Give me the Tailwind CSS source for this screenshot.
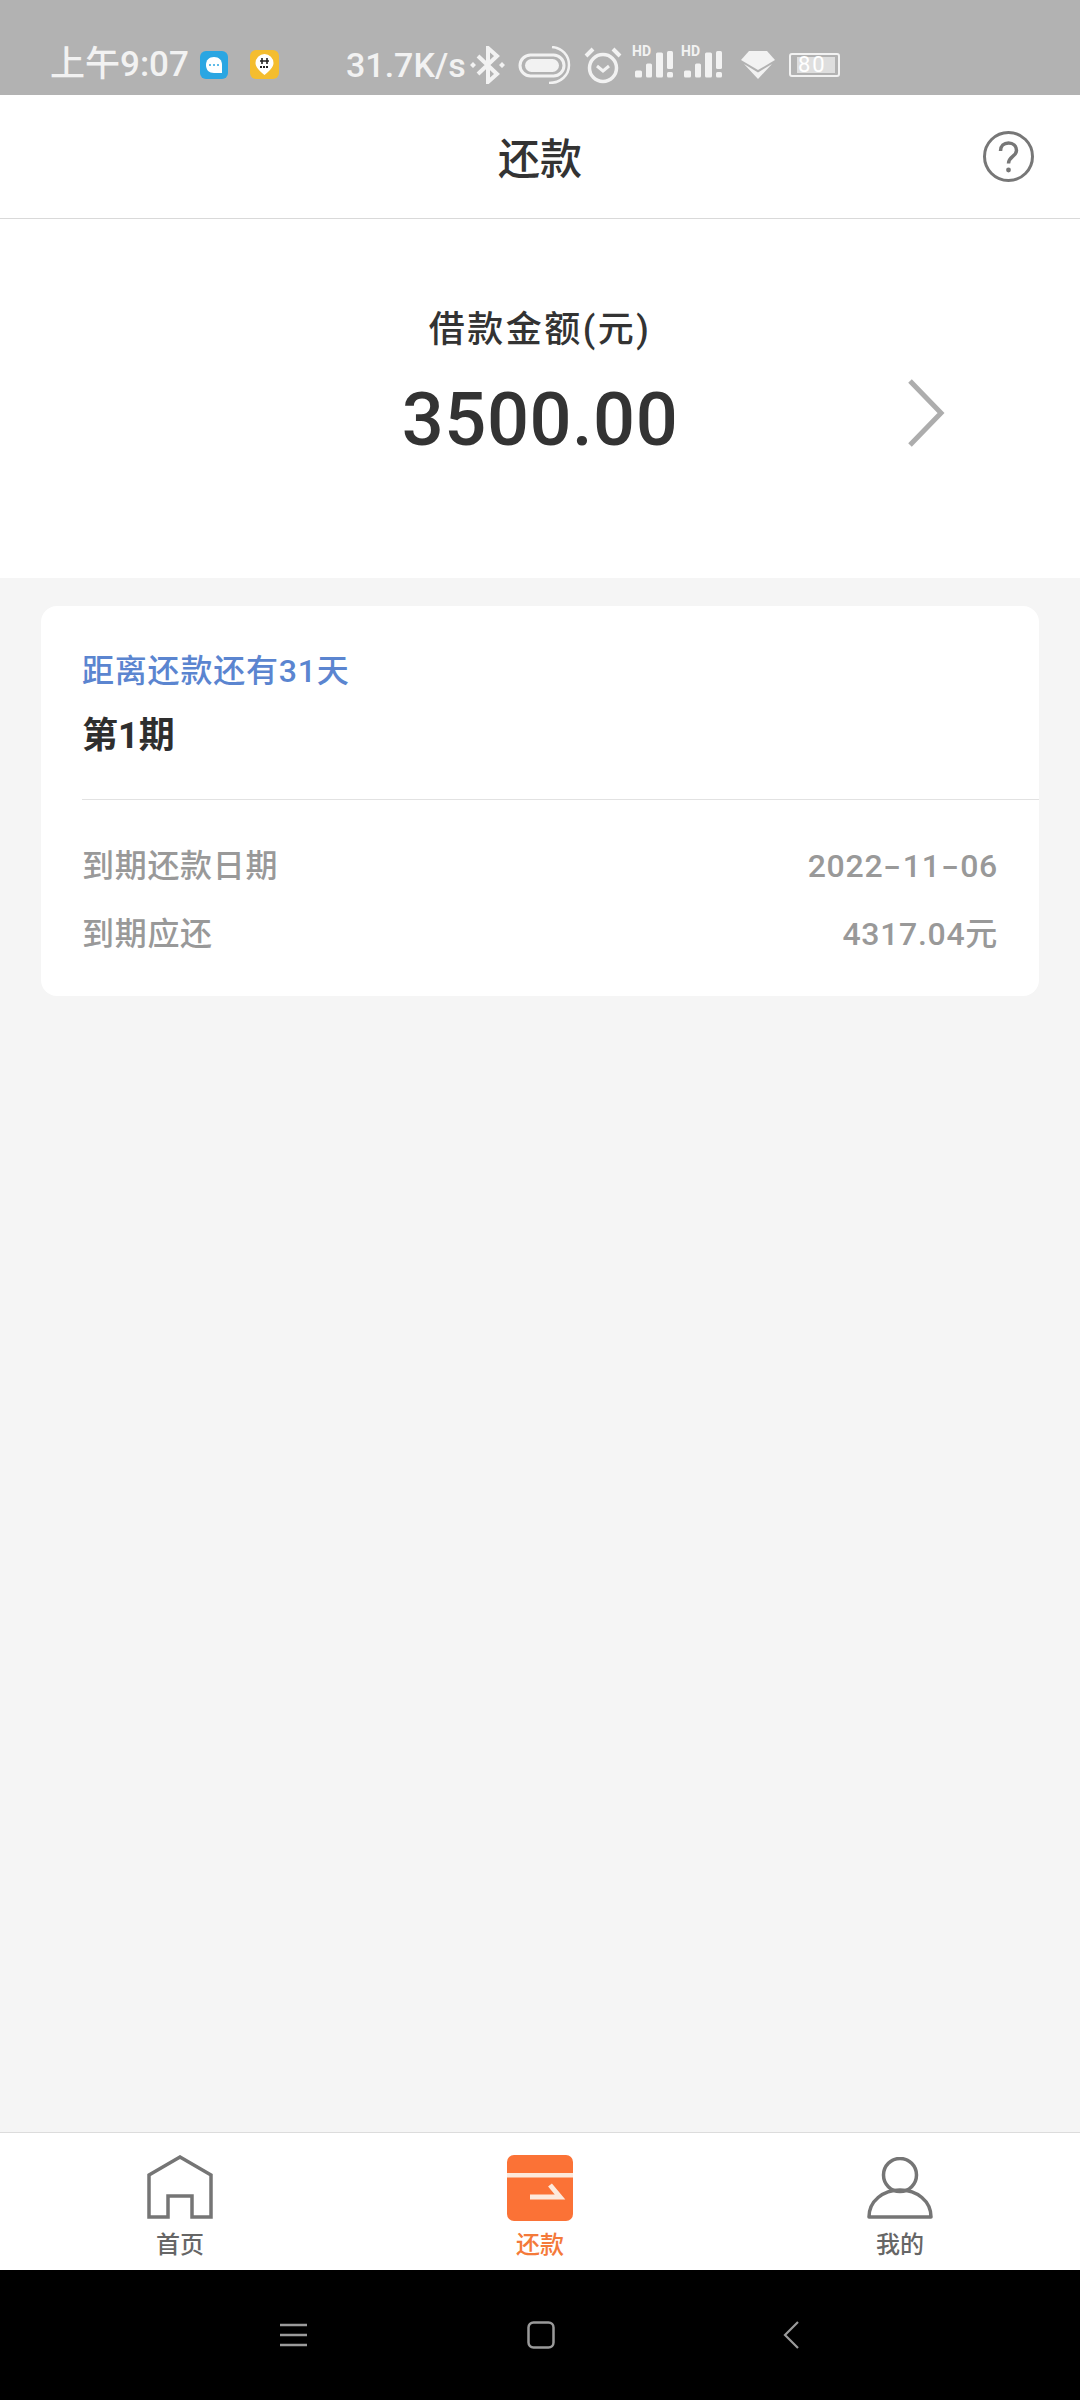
<!DOCTYPE html>
<html lang="zh-CN">
<head>
  <meta charset="UTF-8">
  <meta name="viewport" content="width=device-width, initial-scale=1.0">
  <title>还款</title>
  <script src="https://cdn.jsdelivr.net/npm/@tailwindcss/browser@4"></script>
</head>
<body class="w-[1080px] h-[2400px] flex flex-col bg-[#f5f5f5] overflow-hidden font-['Roboto','Noto_Sans_CJK_SC',sans-serif]">

  <!-- status bar -->
  <div class="h-[95px] shrink-0 bg-[#b2b2b2] flex items-center pt-[34px] pl-[50px] text-[#f2f2f2]">
    <span class="w-[150px] text-[35px] leading-none font-medium whitespace-nowrap">上午9:07</span>
    <svg class="w-[28px] h-[28px]" viewBox="0 0 28 28"><rect width="28" height="28" rx="6" fill="#2ba6e2"/><path d="M14 6c5 0 8 3 8 8v8h-8c-5 0-8-3-8-8s3-8 8-8z" fill="#fff"/><circle cx="10" cy="14" r="1" fill="#2ba6e2"/><circle cx="14" cy="14" r="1" fill="#2ba6e2"/><circle cx="18" cy="14" r="1" fill="#2ba6e2"/></svg>
    <svg class="w-[29px] h-[29px] ml-[22px]" viewBox="0 0 29 29"><rect width="29" height="29" rx="6" fill="#f4bd2f"/><path d="M14.500 4a9 9 0 0 1 9 9c0 4-4 8-9 12-5-4-9-8-9-12a9 9 0 0 1 9-9z" fill="#fff"/><path d="M12 8v6M17 8v6M10 11h9" stroke="#222" stroke-width="1.600"/><path d="M10 17h9" stroke="#222" stroke-width="1.800" stroke-dasharray="2 1"/></svg>
    <span class="ml-[67px] w-[124px] text-[34px] leading-none font-medium whitespace-nowrap">31.7K/s</span>
    <svg class="w-[35px] h-[38px]" viewBox="0 0 35 38" fill="none" stroke="#f2f2f2" stroke-width="4"><path d="M8 10l19 18-9 8V2l9 8L8 28"/><path d="M3 16l3 3-3 3-3-3zM32 16l3 3-3 3-3-3z" fill="#f2f2f2" stroke="none"/></svg>
    <svg class="w-[54px] h-[38px] ml-[13px]" viewBox="0 0 54 38" fill="none" stroke="#f2f2f2"><rect x="2" y="9" width="44" height="21" rx="10.500" stroke-width="3"/><rect x="7" y="13" width="34" height="13" rx="6.500" fill="#f2f2f2" stroke="none"/><path d="M34 1c10 1 17 8 17 18s-8 18-20 18" stroke-width="2.500"/></svg>
    <svg class="w-[38px] h-[38px] ml-[12px]" viewBox="0 0 38 38" fill="none" stroke="#f2f2f2" stroke-width="3.500"><circle cx="19" cy="22" r="13.500"/><path d="M13 20l6 5 6-5" stroke-width="3"/><path d="M2 10l7-7M36 10l-7-7" stroke-width="4"/></svg>
    <div class="ml-[10px] w-[42px] h-[38px] relative">
      <span class="absolute left-0 top-[-2px] text-[14px] leading-none font-bold">HD</span>
      <svg class="absolute left-0 top-0 w-[42px] h-[38px]" viewBox="0 0 42 38" fill="#f2f2f2"><rect x="3" y="24.500" width="7" height="7" rx="1.500"/><rect x="14" y="17.500" width="6" height="14" rx="1.500"/><rect x="24" y="6.500" width="7" height="25" rx="1.500"/><rect x="35" y="5" width="6" height="18" rx="1.500"/><rect x="35" y="26" width="6" height="5.500" rx="1.500"/></svg>
    </div>
    <div class="ml-[7px] w-[42px] h-[38px] relative">
      <span class="absolute left-0 top-[-2px] text-[14px] leading-none font-bold">HD</span>
      <svg class="absolute left-0 top-0 w-[42px] h-[38px]" viewBox="0 0 42 38" fill="#f2f2f2"><rect x="3" y="24.500" width="7" height="7" rx="1.500"/><rect x="14" y="17.500" width="6" height="14" rx="1.500"/><rect x="24" y="6.500" width="7" height="25" rx="1.500"/><rect x="35" y="5" width="6" height="18" rx="1.500"/><rect x="35" y="26" width="6" height="5.500" rx="1.500"/></svg>
    </div>
    <svg class="w-[34px] h-[28px] ml-[18px]" viewBox="0 0 34 28" fill="#f2f2f2"><path d="M8 0h18l8 9-17 10L0 9z"/><path d="M3 13l14 8.500L31 13 17 28z"/></svg>
    <div class="ml-[14px] w-[51px] h-[24px] relative border-[2px] border-[#f2f2f2] rounded-[3px] flex items-center">
      <div class="absolute left-[6px] top-[2px] bottom-[2px] right-[3px] bg-[#dedede]"></div>
      <span class="relative pl-[7px] text-white text-[22px] leading-none tracking-[2px]">80</span>
    </div>
  </div>

  <!-- title bar -->
  <header class="h-[124px] shrink-0 bg-white border-b border-[#d9d9d9] relative flex items-center justify-center pt-[5px]">
    <h1 class="text-[42px] font-medium text-[#333]">还款</h1>
    <svg class="absolute left-[983px] top-[36px] w-[51px] h-[51px]" viewBox="0 0 51 51" fill="none" stroke="#777"><circle cx="25.500" cy="25.500" r="24" stroke-width="3"/><path d="M17.500 20c0-5 3.500-8 8-8s8 3 8 7.500c0 6-8 6-8 13" stroke-width="3.500"/><circle cx="25.500" cy="39" r="2.400" fill="#777" stroke="none"/></svg>
  </header>

  <!-- loan amount -->
  <section class="h-[359px] shrink-0 bg-white relative flex flex-col items-center pt-[86px]">
    <p class="h-[50px] text-[36px] leading-[50px] font-medium tracking-[2.500px] text-[#333] whitespace-nowrap">借款金额(元)</p>
    <p class="mt-[21px] text-[74px] leading-[88px] font-medium tracking-[0.500px] text-[#333]">3500.00</p>
    <svg class="absolute left-[907px] top-[160px] w-[38px] h-[68px]" viewBox="0 0 38 68" fill="none" stroke="#adadad" stroke-width="5"><path d="M3 2l31 32L3 66"/></svg>
  </section>

  <!-- installment card -->
  <main class="flex-1 px-[41px] pt-[28px]">
    <article class="h-[390px] bg-white rounded-[16px] pl-[41px] flex flex-col">
      <p class="mt-[42px] h-[46px] text-[32px] leading-[46px] font-medium tracking-[0.800px] text-[#5b85d0]">距离还款还有31天</p>
      <p class="mt-[19px] h-[46px] text-[36px] leading-[46px] font-bold text-[#2e2e2e]">第1期</p>
      <div class="mt-[40px] h-px bg-[#e2e2e2]"></div>
      <div class="mt-[43px] pr-[41px] flex justify-between text-[32px] leading-[46px] font-medium tracking-[0.700px] text-[#999]">
        <span>到期还款日期</span>
        <span>2022<span class="inline-block mx-[4px] scale-x-[1.6]">-</span>11<span class="inline-block mx-[4px] scale-x-[1.6]">-</span>06</span>
      </div>
      <div class="mt-[22px] pr-[41px] flex justify-between text-[32px] leading-[46px] font-medium tracking-[0.700px] text-[#999]">
        <span>到期应还</span><span>4317.04元</span>
      </div>
    </article>
  </main>

  <!-- tab bar -->
  <nav class="h-[138px] shrink-0 bg-white border-t border-[#dcdcdc] grid grid-cols-3 text-[24px] leading-[30px] font-medium">
    <a class="flex flex-col items-center pt-[22px] text-[#666]">
      <svg class="w-[66px] h-[64px]" viewBox="0 0 66 64" fill="none" stroke="#757575" stroke-width="3.500"><path d="M2 62V20L33 2l31 18v42H45V41H21v21z"/></svg>
      <span class="mt-[11px]">首页</span>
    </a>
    <a class="flex flex-col items-center pt-[22px] text-[#f47a3a]">
      <svg class="w-[66px] h-[66px]" viewBox="0 0 66 66"><rect width="66" height="66" rx="7" fill="#fb7236"/><rect y="18" width="66" height="4.500" fill="#fde9dc"/><path d="M23 42h30L43 30" fill="none" stroke="#fde9dc" stroke-width="5"/></svg>
      <span class="mt-[9px]">还款</span>
    </a>
    <a class="flex flex-col items-center pt-[24px] text-[#666]">
      <svg class="w-[66px] h-[62px]" viewBox="0 0 66 62" fill="none" stroke="#757575" stroke-width="3.500"><circle cx="33" cy="18" r="16.500"/><path d="M2 60c0-16 14-27 31-27s31 11 31 27z" stroke-linejoin="round"/></svg>
      <span class="mt-[11px]">我的</span>
    </a>
  </nav>

  <!-- system nav -->
  <div class="h-[130px] shrink-0 bg-black flex items-center pl-[280px]">
    <svg class="w-[27px] h-[24px]" viewBox="0 0 27 24" stroke="#9a9a9a" stroke-width="2.500"><path d="M0 2h27M0 12h27M0 22h27"/></svg>
    <svg class="w-[28px] h-[28px] ml-[220px]" viewBox="0 0 28 28" fill="none" stroke="#9a9a9a" stroke-width="2.500"><rect x="1.500" y="1.500" width="25" height="25" rx="5"/></svg>
    <svg class="w-[16px] h-[28px] ml-[228px]" viewBox="0 0 16 28" fill="none" stroke="#9a9a9a" stroke-width="2.200"><path d="M15 1L2 14l13 13"/></svg>
  </div>
</body>
</html>
